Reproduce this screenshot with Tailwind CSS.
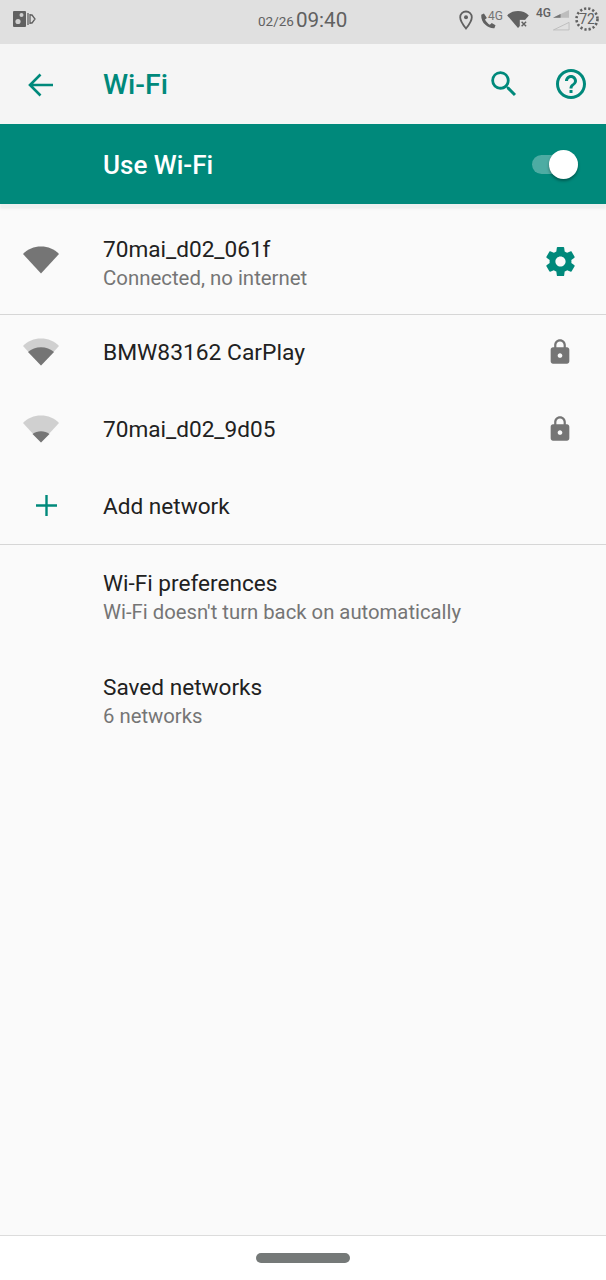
<!DOCTYPE html>
<html lang="en">
<head>
  <meta charset="UTF-8" />
  <title>Wi-Fi</title>
  <script src="https://cdn.jsdelivr.net/npm/@tailwindcss/browser@4"></script>
</head>
<body class="bg-[#fafafa] font-[Roboto,sans-serif] text-[#212121]">
  <div class="w-[606px] h-[1280px] flex flex-col overflow-hidden">

    <!-- status bar -->
    <div class="h-[44px] bg-[#e0e0e0] flex items-center relative text-[#616161] shrink-0">
      <svg class="ml-[13px] mb-[6px]" width="23" height="16" viewBox="0 0 23 16">
        <rect x="0" y="0" width="13" height="16" rx="1" fill="#616161"/>
        <circle cx="8.5" cy="4" r="2" fill="#d0d0d0"/>
        <circle cx="5" cy="10.5" r="2.6" fill="#d0d0d0"/>
        <path d="M15 2v12M17 3v10M17 4h2l3 4-3 4h-2" fill="none" stroke="#616161" stroke-width="1.3"/>
      </svg>
      <div class="absolute left-[258px] top-0 h-[40px] flex items-center gap-[2px]">
        <span class="text-[13.5px] mt-[3px]">02/26</span>
        <span class="text-[20.6px]">09:40</span>
      </div>
      <div class="absolute left-[458px] top-[6px] flex items-start">
        <svg class="mt-[4px]" width="16" height="20" viewBox="0 0 16 20">
          <path d="M8 1.5a5.8 5.8 0 0 0-5.8 5.8C2.200 11.500 8 18.500 8 18.500s5.800-7 5.800-11.200A5.800 5.800 0 0 0 8 1.500z" fill="none" stroke="#616161" stroke-width="1.800"/>
          <circle cx="8" cy="7.300" r="2" fill="#616161"/>
        </svg>
        <div class="relative w-[21px] h-[24px] ml-[6px]">
          <svg class="absolute left-[-1px] top-[6px]" width="18" height="18" viewBox="0 0 24 24">
            <path d="M6.600 2 3 3.500C2.500 9 5 14 8.500 17s8 5 12 4.500l1.500-4-5-3-2.500 2.500c-2-1-5.500-4.500-6.500-7L10.500 8z" fill="#616161"/>
          </svg>
          <span class="absolute left-[8px] top-[4px] text-[12px] leading-[12px] text-[#757575]">4G</span>
        </div>
        <svg class="ml-[6px] mt-[4px]" width="22" height="18" viewBox="0 0 24 20">
          <path d="M0 6C3 2.500 7.500 1 12 1s9 1.500 12 5l-9 11-3 3z" fill="#616161"/>
          <rect x="14" y="11" width="10" height="9" fill="#e0e0e0"/>
          <path d="M16 13l5 5M21 13l-5 5" stroke="#616161" stroke-width="1.600"/>
        </svg>
        <div class="relative w-[34px] h-[28px] ml-[7px]">
          <span class="absolute left-0 top-0 text-[12px] leading-[14px] font-medium text-[#616161]">4G</span>
          <svg class="absolute left-[17px] top-[4px]" width="17" height="21" viewBox="0 0 18 22">
            <path d="M0 8 17 0v8z" fill="#bdbdbd"/>
            <path d="M0 8h8V4.200z" fill="#757575"/>
            <path d="M0.500 21 17 13v8z" fill="none" stroke="#bdbdbd" stroke-width="1"/>
          </svg>
        </div>
        <div class="relative w-[24px] h-[26px] ml-[5px]">
          <svg class="absolute inset-0" width="24" height="26" viewBox="0 0 24 26">
            <circle cx="12" cy="13" r="10.500" fill="none" stroke="#616161" stroke-width="2.600" stroke-dasharray="2.200 2"/>
          </svg>
          <span class="absolute inset-0 flex items-center justify-center text-[14px] text-[#616161]">72</span>
        </div>
      </div>
    </div>

    <!-- app bar -->
    <div class="h-[80px] bg-[#f5f5f5] flex items-center shrink-0">
      <div class="w-[103px] pl-[28px] pt-[2px]">
        <svg class="w-[26px] h-[26px] text-[#00897b]" viewBox="0 0 26 26" fill="none" stroke="currentColor" stroke-width="2.600">
          <path d="M25 13H2M12.500 2.500 2 13l10.500 10.500"/>
        </svg>
      </div>
      <h1 class="text-[28.5px] font-medium text-[#00897b] flex-1 pt-[2px]">Wi-Fi</h1>
      <svg class="w-[34px] h-[34px] mr-[32px] text-[#00897b]" viewBox="0 0 24 24" fill="currentColor">
        <path d="M15.500 14h-.790l-.280-.270A6.470 6.470 0 0 0 16 9.500 6.500 6.500 0 1 0 9.500 16c1.610 0 3.090-.590 4.230-1.570l.270.280v.790l5 4.990L20.490 19l-4.990-5zm-6 0C7.010 14 5 11.990 5 9.500S7.010 5 9.500 5 14 7.010 14 9.500 11.990 14 9.500 14z"/>
      </svg>
      <svg class="w-[36px] h-[36px] mr-[17px] text-[#00897b]" viewBox="0 0 24 24" fill="currentColor">
        <path d="M11 18h2v-2h-2v2zm1-16C6.480 2 2 6.480 2 12s4.480 10 10 10 10-4.480 10-10S17.520 2 12 2zm0 18c-4.410 0-8-3.590-8-8s3.590-8 8-8 8 3.590 8 8-3.590 8-8 8zm0-14c-2.210 0-4 1.790-4 4h2c0-1.100.900-2 2-2s2 .900 2 2c0 2-3 1.750-3 5h2c0-2.250 3-2.500 3-5 0-2.210-1.790-4-4-4z"/>
      </svg>
    </div>

    <!-- use wifi -->
    <div class="h-[80px] bg-[#00897b] flex items-center shrink-0 relative z-10 shadow-[0_5px_2px_rgba(0,80,60,0.06)]">
      <span class="ml-[103px] text-[26px] font-medium text-white flex-1 pt-[2px]">Use Wi-Fi</span>
      <div class="relative w-[46px] h-[19px] mr-[28px] rounded-full bg-white/30">
        <div class="absolute right-0 top-[-5px] w-[29px] h-[29px] rounded-full bg-white shadow-[0_2px_3px_rgba(0,0,0,0.35)]"></div>
      </div>
    </div>

    <!-- connected network -->
    <div class="h-[111px] flex items-center border-b border-[#d6d6d6] pt-[8px] shrink-0">
      <div class="w-[103px] pl-[23px] mb-[6px]">
        <svg width="36" height="28" viewBox="0 2 36 27"><path d="M0 9.500C4.500 4.500 11 2 18 2s13.500 2.500 18 7.500L18 29z" fill="#757575"/></svg>
      </div>
      <div class="flex-1">
        <div class="text-[22.6px] leading-[30px]">70mai_d02_061f</div>
        <div class="text-[20.4px] leading-[26px] text-[#757575]">Connected, no internet</div>
      </div>
      <svg class="w-[35px] h-[35px] mr-[28px] mb-[3px] text-[#00897b]" viewBox="0 0 24 24" fill="currentColor">
        <path d="M19.430 12.980c.040-.320.070-.640.070-.980s-.030-.660-.070-.980l2.110-1.650c.190-.150.240-.420.120-.640l-2-3.460c-.120-.220-.390-.300-.610-.220l-2.490 1c-.520-.400-1.080-.730-1.690-.980l-.380-2.650A.488.488 0 0 0 14 2h-4c-.250 0-.460.180-.490.420l-.380 2.650c-.610.250-1.170.590-1.690.980l-2.490-1c-.230-.090-.490 0-.610.220l-2 3.460c-.130.220-.070.490.120.640l2.110 1.650c-.040.320-.070.650-.070.980s.030.660.070.980l-2.110 1.650c-.190.150-.240.420-.120.640l2 3.460c.120.220.390.300.610.220l2.490-1c.520.400 1.080.730 1.690.980l.380 2.650c.030.240.240.420.490.420h4c.250 0 .460-.180.490-.420l.380-2.650c.610-.250 1.170-.590 1.690-.980l2.490 1c.230.090.490 0 .610-.220l2-3.460c.120-.220.070-.490-.120-.640l-2.110-1.650zM12 15.500c-1.930 0-3.500-1.570-3.500-3.500s1.570-3.500 3.500-3.500 3.500 1.570 3.500 3.500-1.570 3.500-3.500 3.500z"/>
      </svg>
    </div>

    <!-- other networks -->
    <div class="h-[77px] flex items-center shrink-0">
      <div class="w-[103px] pl-[23px] mb-[3px]">
        <svg width="36" height="28" viewBox="0 2 36 27"><path d="M0 9.500C4.500 4.500 11 2 18 2s13.500 2.500 18 7.500L18 29z" fill="#d0d0d0"/><path d="M5 15.600C8.500 12.500 13 10.800 18 10.800s9.500 1.700 13 4.800L18 29z" fill="#757575"/></svg>
      </div>
      <span class="flex-1 text-[22.8px] pb-[1px]">BMW83162 CarPlay</span>
      <svg class="w-[28px] h-[28px] mr-[32px] mb-[3px] text-[#757575]" viewBox="0 0 24 24" fill="currentColor">
        <path d="M18 8h-1V6c0-2.760-2.240-5-5-5S7 3.240 7 6v2H6c-1.100 0-2 .900-2 2v10c0 1.100.900 2 2 2h12c1.100 0 2-.900 2-2V10c0-1.100-.900-2-2-2zm-6 9c-1.100 0-2-.900-2-2s.900-2 2-2 2 .900 2 2-.900 2-2 2zm3.100-9H8.900V6c0-1.710 1.390-3.100 3.100-3.100 1.710 0 3.100 1.390 3.100 3.100v2z"/>
      </svg>
    </div>
    <div class="h-[77px] flex items-center shrink-0">
      <div class="w-[103px] pl-[23px] mb-[4px]">
        <svg width="36" height="28" viewBox="0 2 36 27"><path d="M0 9.500C4.500 4.500 11 2 18 2s13.500 2.500 18 7.500L18 29z" fill="#d0d0d0"/><path d="M9.500 20.500C12 18.800 14.800 17.800 18 17.800s6 1 8.500 2.700L18 29z" fill="#757575"/></svg>
      </div>
      <span class="flex-1 text-[22.6px] pb-[1px]">70mai_d02_9d05</span>
      <svg class="w-[28px] h-[28px] mr-[32px] mb-[3px] text-[#757575]" viewBox="0 0 24 24" fill="currentColor">
        <path d="M18 8h-1V6c0-2.760-2.240-5-5-5S7 3.240 7 6v2H6c-1.100 0-2 .900-2 2v10c0 1.100.900 2 2 2h12c1.100 0 2-.900 2-2V10c0-1.100-.900-2-2-2zm-6 9c-1.100 0-2-.900-2-2s.900-2 2-2 2 .900 2 2-.900 2-2 2zm3.100-9H8.900V6c0-1.710 1.390-3.100 3.100-3.100 1.710 0 3.100 1.390 3.100 3.100v2z"/>
      </svg>
    </div>
    <div class="h-[76px] flex items-center border-b border-[#d6d6d6] shrink-0">
      <div class="w-[103px] pl-[36px] mb-[3px]">
        <svg class="text-[#00897b]" width="21" height="21" viewBox="0 0 21 21" fill="none" stroke="currentColor" stroke-width="2.400"><path d="M10.500 0v21M0 10.500h21"/></svg>
      </div>
      <span class="flex-1 text-[22.6px]">Add network</span>
    </div>

    <!-- preferences -->
    <div class="h-[104px] pl-[103px] flex flex-col justify-center shrink-0">
      <div class="text-[22.6px] leading-[30px]">Wi-Fi preferences</div>
      <div class="text-[20.3px] leading-[26px] text-[#757575]">Wi-Fi doesn't turn back on automatically</div>
    </div>
    <div class="h-[104px] pl-[103px] flex flex-col justify-center shrink-0">
      <div class="text-[22.6px] leading-[30px]">Saved networks</div>
      <div class="text-[20.3px] leading-[26px] text-[#757575]">6 networks</div>
    </div>

    <div class="flex-1"></div>

    <!-- nav bar -->
    <div class="h-[45px] bg-white border-t border-[#dcdcdc] flex items-center justify-center shrink-0">
      <div class="w-[94px] h-[10px] rounded-full bg-[#757978]"></div>
    </div>
  </div>
</body>
</html>
